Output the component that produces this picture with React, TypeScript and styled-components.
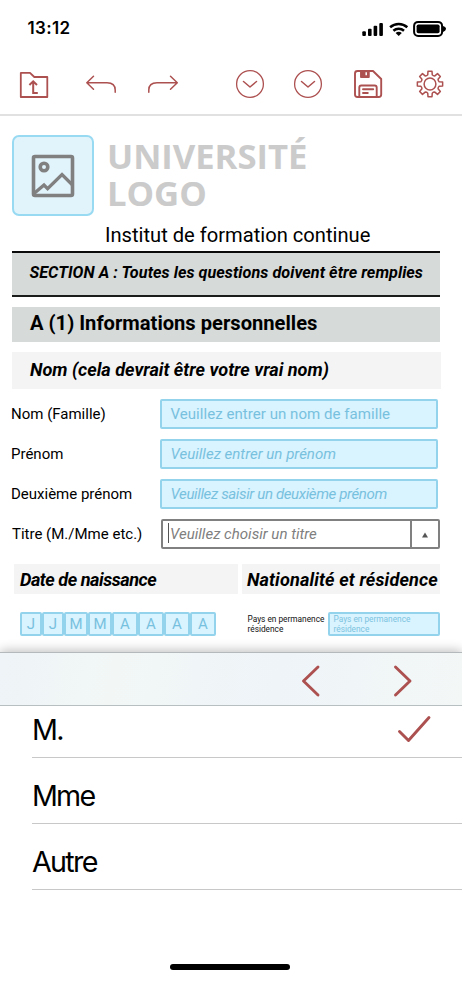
import React from "react";
import styled, { createGlobalStyle } from "styled-components";

const RED = "#ad5050";
const BLUE = "#93d3ec";
const PALE = "#d9f3ff";

const Global = createGlobalStyle`
  * { box-sizing: border-box; }
  html, body { margin: 0; padding: 0; background: #fff; }
  body { font-family: Roboto, "Liberation Sans", sans-serif; color: #000; }
`;

const Screen = styled.div`
  width: 462px;
  height: 990px;
  overflow: hidden;
  background: #fff;
  display: flex;
  flex-direction: column;
`;

const StatusBar = styled.header`
  height: 56px;
  flex: none;
  padding: 0 16px 0 27.5px;
  display: flex;
  align-items: center;
  justify-content: space-between;
`;

const Clock = styled.span`
  font: 600 17px/20px Inter, sans-serif;
  letter-spacing: 0.35px;
`;

const StatusIcons = styled.svg`
  display: block;
  width: 84px;
  height: 18px;
`;

const Toolbar = styled.nav`
  height: 60px;
  flex: none;
  padding: 10px 18px 0 19px;
  border-bottom: 2px solid #e1e1e1;
  display: grid;
  grid-template-columns: 66px 62px 86px 58px 61px 62px 30px;
`;

const ToolButton = styled.button`
  padding: 0;
  width: 32px;
  height: 36px;
  border: 0;
  background: none;
  color: ${RED};
`;

const ToolIcon = styled.svg`
  display: block;
  width: 32px;
  height: 36px;
  fill: none;
  stroke: currentColor;
  stroke-width: 1.5;
  stroke-linejoin: round;
  stroke-linecap: round;
`;

const Document = styled.main`
  height: 536px;
  flex: none;
  padding: 19px 21px 0 12px;
  display: flex;
  flex-direction: column;
`;

const Brand = styled.div`
  display: flex;
  gap: 13px;
  height: 81px;
`;

const LogoBox = styled.div`
  width: 82px;
  height: 81px;
  border: 2px solid #98daf2;
  border-radius: 7px;
  background: #e1f3fb;
  display: grid;
  place-items: center;
`;

const LogoPicture = styled.svg`
  width: 44px;
  height: 44px;
  fill: none;
  stroke: #808080;
  stroke-width: 3.6;
`;

const BrandName = styled.div`
  padding-top: 2px;
  font: 700 34.7px/37px "Open Sans", sans-serif;
  letter-spacing: -0.05px;
  color: #cbcbcb;
`;

const Institute = styled.div`
  height: 35px;
  padding: 7px 0 0 93px;
  font-size: 20.15px;
  line-height: 24px;
  white-space: nowrap;
`;

const SectionNotice = styled.h2`
  margin: 0 0 10px;
  width: 428px;
  height: 46px;
  padding: 10px 0 0 17.5px;
  border-top: 2px solid #0a0a0a;
  border-bottom: 2px solid #1a1c1c;
  background: #d6dad9;
  font: italic 700 16.2px/20px Roboto, sans-serif;
  letter-spacing: 0.05px;
  white-space: nowrap;
`;

const SectionTitle = styled.h3`
  margin: 0 0 10px;
  width: 428px;
  height: 35px;
  padding-left: 18px;
  background: #d6dad9;
  font: 700 20.15px/33px Roboto, sans-serif;
`;

const GroupTitle = styled.h4<{
  $width: number;
  $height: number;
  $line: number;
  $pad: number;
  $spacing?: number;
}>`
  margin: 0;
  width: ${(p) => p.$width}px;
  height: ${(p) => p.$height}px;
  padding-left: ${(p) => p.$pad}px;
  background: #f4f4f4;
  font: italic 700 18.1px/${(p) => p.$line}px Roboto, sans-serif;
  letter-spacing: ${(p) => p.$spacing ?? 0}px;
  white-space: nowrap;
`;

const Fields = styled.div`
  padding-top: 10px;
  display: grid;
  gap: 10px;
`;

const FieldRow = styled.label`
  display: grid;
  grid-template-columns: 148px auto;
  height: 30px;
`;

const FieldLabel = styled.span<{ $indent?: number }>`
  margin-left: ${(p) => p.$indent ?? -1}px;
  font-size: 15px;
  line-height: 31px;
  white-space: nowrap;
`;

const TextField = styled.span<{ $plain?: boolean; $spacing?: number }>`
  margin-left: -0.5px;
  width: 278px;
  height: 30px;
  padding-left: 9px;
  border: 2px solid ${BLUE};
  border-radius: 2px;
  background: ${PALE};
  color: #78c1de;
  font-size: 15.05px;
  line-height: 27px;
  font-style: ${(p) => (p.$plain ? "normal" : "italic")};
  letter-spacing: ${(p) => p.$spacing ?? 0}px;
  white-space: nowrap;
`;

const SelectField = styled.span`
  margin-left: 0.5px;
  width: 279px;
  height: 30px;
  border: 2px solid #808080;
  border-radius: 2px;
  color: #808080;
  display: grid;
  grid-template-columns: 7.5px 1fr 28px;
  font-style: italic;
  font-size: 15.05px;
  line-height: 27px;
`;

const Caret = styled.span`
  margin: 2px 0 0 5px;
  width: 1.5px;
  height: 20px;
  background: #555;
`;

const DropButton = styled.span`
  border-left: 2px solid #808080;
  display: grid;
  place-items: center;
`;

const Columns = styled.div`
  padding-top: 15px;
  margin-left: 2px;
  display: flex;
  gap: 4px;
`;

const SmallRow = styled.div`
  padding-top: 18px;
  margin-left: 8px;
  display: flex;
`;

const DateCells = styled.div`
  width: 227.5px;
  display: flex;
`;

const DateCell = styled.span<{ $width: number }>`
  width: ${(p) => p.$width}px;
  height: 24px;
  border: 2px solid ${BLUE};
  border-radius: 2px;
  background: ${PALE};
  color: #78c1de;
  font-size: 15px;
  line-height: 21px;
  text-align: center;
`;

const TinyLabel = styled.span`
  width: 80.5px;
  padding-top: 2px;
  font-size: 8.3px;
  line-height: 10px;
  color: #111;
`;

const TinyField = styled.span`
  width: 112px;
  height: 24px;
  padding-left: 3.5px;
  border: 2px solid ${BLUE};
  border-radius: 2px;
  background: ${PALE};
  color: #7cc4e0;
  font-size: 8.3px;
  line-height: 10px;
`;

const Picker = styled.section`
  flex: 1;
  background: #fff;
  box-shadow: 0 -2px 10px rgba(0, 0, 0, 0.24);
  display: flex;
  flex-direction: column;
`;

const PickerBar = styled.div`
  height: 54px;
  border-top: 1px solid #b4b9bb;
  border-bottom: 1px solid #b8bfc1;
  background: linear-gradient(100deg, #eef4f7, #f2f7f6 25%, #eef4f8 60%, #f3f7f6);
  display: flex;
  gap: 62px;
  padding: 10px 0 0 296px;
`;

const NavIcon = styled.svg`
  width: 30px;
  height: 36px;
  fill: none;
  stroke: ${RED};
  stroke-width: 2.9;
  stroke-linecap: round;
  stroke-linejoin: round;
`;

const Options = styled.ul`
  list-style: none;
  margin: 0 0 0 32px;
  padding: 0;
`;

const Option = styled.li<{ $height: number; $spacing: number }>`
  height: ${(p) => p.$height}px;
  padding-right: 30px;
  border-bottom: 1px solid #c8c8c8;
  display: flex;
  align-items: flex-end;
  justify-content: space-between;
  font: 400 28.7px/54px Inter, sans-serif;
  letter-spacing: ${(p) => p.$spacing}px;
`;

const Check = styled(NavIcon)`
  margin-bottom: 11px;
  width: 36px;
`;

const HomeIndicator = styled.div`
  margin: auto auto 20px 170px;
  width: 120px;
  height: 6px;
  border-radius: 3px;
  background: #000;
`;

const DATE: [string, number][] = [
  ["J", 22], ["J", 22], ["M", 24], ["M", 24], ["A", 26], ["A", 26], ["A", 26], ["A", 26],
];

/* Outline of an eight-toothed gear centred on (16, 18). */
const gearPath = (() => {
  const point = (radius: number, degrees: number) => {
    const a = ((degrees - 90) * Math.PI) / 180;
    return `${(16 + radius * Math.cos(a)).toFixed(2)} ${(18 + radius * Math.sin(a)).toFixed(2)}`;
  };
  let d = "";
  for (let i = 0; i < 8; i++) {
    const c = i * 45;
    d += `${i ? "L" : "M"}${point(9.4, c - 14)}L${point(12.8, c - 9)}L${point(12.8, c + 9)}L${point(9.4, c + 14)}`;
    d += `Q${point(8.6, c + 22.5)} ${point(9.4, c + 31)}`;
  }
  return d + "Z";
})();

const ChevronCircle = () => (
  <ToolIcon viewBox="0 0 32 36">
    <circle cx="17" cy="18" r="13.4" strokeWidth="1.3" />
    <path d="M10.500 15.500l6.500 5.500 6.500-5.500" />
  </ToolIcon>
);

export default function App() {
  return (
    <>
      <Global />
      <Screen>
        <StatusBar>
          <Clock>13:12</Clock>
          <StatusIcons viewBox="0 0 84 18">
            <rect x="0.3" y="12.3" width="3.6" height="4.7" rx="1" />
            <rect x="6" y="9.7" width="3.6" height="7.3" rx="1" />
            <rect x="11.6" y="6.8" width="3.6" height="10.2" rx="1" />
            <rect x="17.3" y="4" width="3.6" height="13" rx="1" />
            <g fill="none" stroke="#000" strokeWidth="2.5">
              <path d="M28.1 8.3a13 13 0 0 1 17.2 0" />
              <path d="M31.4 11.8a8 8 0 0 1 10.6 0" />
            </g>
            <path d="M33.6 14.1a4.8 4.8 0 0 1 6.2 0l-3.1 3z" />
            <rect x="52.1" y="2.9" width="28" height="14" rx="4" fill="#fff" stroke="#000" strokeWidth="2" />
            <rect x="54.6" y="5.5" width="23" height="8.8" rx="1.8" />
            <path d="M81 7q3.2 1 3 3t-3 3z" />
          </StatusIcons>
        </StatusBar>

        <Toolbar>
          <ToolButton aria-label="Ouvrir">
            <ToolIcon viewBox="0 0 32 36">
              <path d="M2 6.8h9l4.3 4.2H28.3V31H1.8V7z" strokeWidth="1.8" />
              <path d="M10.4 19l3.800-3.700L18 19M14.200 15.800V27h4.600" strokeWidth="2" strokeLinecap="butt" strokeLinejoin="miter" />
            </ToolIcon>
          </ToolButton>
          <ToolButton aria-label="Annuler">
            <ToolIcon viewBox="0 0 32 36">
              <path d="M8.500 10.300L1.800 16.700l6.700 6.500M2.500 16.700H22Q30.200 16.700 30.200 24v2.300" />
            </ToolIcon>
          </ToolButton>
          <ToolButton aria-label="Rétablir">
            <ToolIcon viewBox="0 0 32 36">
              <path d="M23.500 10.300l6.800 6.400-6.800 6.500M29.500 16.700H10Q1.800 16.700 1.800 24v2.300" />
            </ToolIcon>
          </ToolButton>
          <ToolButton aria-label="Précédent"><ChevronCircle /></ToolButton>
          <ToolButton aria-label="Suivant"><ChevronCircle /></ToolButton>
          <ToolButton aria-label="Enregistrer">
            <ToolIcon viewBox="0 0 32 36">
              <g strokeWidth="1.9">
                <path d="M5.500 5H21l8.200 8V28.500q0 2.500-2.500 2.500H5.500Q3 31 3 28.500V7.500Q3 5 5.500 5z" />
                <path d="M7.300 31V21.500q0-2 2-2H22.700q2 0 2 2V31" />
                <path d="M11 23.300H21.200M11 27H15.800" />
                <path d="M9 5V11h7.800V5z" fill="currentColor" />
              </g>
              <path d="M14.200 6.300V9.300" stroke="#fff" strokeWidth="1.500" strokeLinecap="butt" />
            </ToolIcon>
          </ToolButton>
          <ToolButton aria-label="Réglages">
            <ToolIcon viewBox="0 0 32 36">
              <path d={gearPath} />
              <circle cx="16" cy="18" r="5.900" strokeWidth="1.500" />
            </ToolIcon>
          </ToolButton>
        </Toolbar>

        <Document>
          <Brand>
            <LogoBox>
              <LogoPicture viewBox="0 0 44 44">
                <rect x="2.500" y="2.500" width="39" height="39" rx="1.500" />
                <circle cx="13" cy="13" r="3.800" />
                <path d="M3 39.500L13 31l3.600 3.600L31 20.500 41 30.500" strokeWidth="3.300" />
              </LogoPicture>
            </LogoBox>
            <BrandName>UNIVERSITÉ<br />LOGO</BrandName>
          </Brand>
          <Institute>Institut de formation continue</Institute>
          <SectionNotice>SECTION A : Toutes les questions doivent être remplies</SectionNotice>
          <SectionTitle>A (1) Informations personnelles</SectionTitle>
          <GroupTitle $width={429} $height={37} $line={35} $pad={18}>Nom (cela devrait être votre vrai nom)</GroupTitle>

          <Fields>
            <FieldRow>
              <FieldLabel>Nom (Famille)</FieldLabel>
              <TextField $plain $spacing={0.03}>Veuillez entrer un nom de famille</TextField>
            </FieldRow>
            <FieldRow>
              <FieldLabel>Prénom</FieldLabel>
              <TextField>Veuillez entrer un prénom</TextField>
            </FieldRow>
            <FieldRow>
              <FieldLabel>Deuxième prénom</FieldLabel>
              <TextField $spacing={-0.38}>Veuillez saisir un deuxième prénom</TextField>
            </FieldRow>
            <FieldRow>
              <FieldLabel $indent={0}>Titre (M./Mme etc.)</FieldLabel>
              <SelectField>
                <Caret />
                Veuillez choisir un titre
                <DropButton>
                  <svg width="8" height="6" viewBox="0 0 8 6"><path d="M4 .5L7 5.500H1z" fill="#555" /></svg>
                </DropButton>
              </SelectField>
            </FieldRow>
          </Fields>

          <Columns>
            <GroupTitle $width={224} $height={30} $line={32} $pad={6} $spacing={-0.47}>Date de naissance</GroupTitle>
            <GroupTitle $width={198} $height={30} $line={32} $pad={5} $spacing={0.13}>Nationalité et résidence</GroupTitle>
          </Columns>
          <SmallRow>
            <DateCells>
              {DATE.map(([letter, width], i) => (
                <DateCell key={i} $width={width}>{letter}</DateCell>
              ))}
            </DateCells>
            <TinyLabel>Pays en permanence<br />résidence</TinyLabel>
            <TinyField>Pays en permanence<br />résidence</TinyField>
          </SmallRow>
        </Document>

        <Picker>
          <PickerBar>
            <NavIcon viewBox="0 0 30 36"><path d="M22 4L7.500 18 22 32" /></NavIcon>
            <NavIcon viewBox="0 0 30 36"><path d="M7.500 4l14.500 14-14.500 14" /></NavIcon>
          </PickerBar>
          <Options>
            <Option $height={52} $spacing={-1.700}>
              M.
              <Check viewBox="0 0 36 36"><path d="M3.500 21.500l9 9L33 7.500" /></Check>
            </Option>
            <Option $height={66} $spacing={-1.800}>Mme</Option>
            <Option $height={66} $spacing={-1.700}>Autre</Option>
          </Options>
          <HomeIndicator />
        </Picker>
      </Screen>
    </>
  );
}
